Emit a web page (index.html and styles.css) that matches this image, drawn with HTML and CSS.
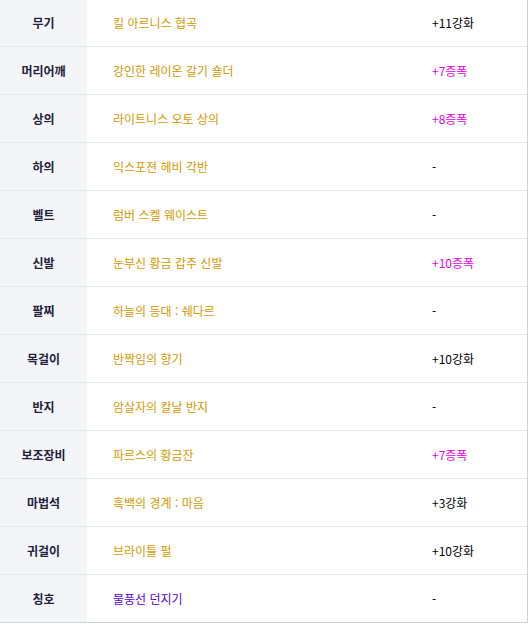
FILE: index.html
```html
<!DOCTYPE html>
<html lang="ko">
<head>
<meta charset="utf-8">
<link rel="stylesheet" href="styles.css">
</head>
<body>
<div class="equip">
  <div class="row"><div class="slot">무기</div><div class="name">킬 아르니스 협곡</div><div class="up">+11강화</div></div>
  <div class="row"><div class="slot">머리어깨</div><div class="name">강인한 레이온 갈기 숄더</div><div class="up amp">+7증폭</div></div>
  <div class="row"><div class="slot">상의</div><div class="name">라이트니스 오토 상의</div><div class="up amp">+8증폭</div></div>
  <div class="row"><div class="slot">하의</div><div class="name">익스포젼 헤비 각반</div><div class="up">-</div></div>
  <div class="row"><div class="slot">벨트</div><div class="name">럼버 스켈 웨이스트</div><div class="up">-</div></div>
  <div class="row"><div class="slot">신발</div><div class="name">눈부신 황금 갑주 신발</div><div class="up amp">+10증폭</div></div>
  <div class="row"><div class="slot">팔찌</div><div class="name">하늘의 등대 : 쉐다르</div><div class="up">-</div></div>
  <div class="row"><div class="slot">목걸이</div><div class="name">반짝임의 향기</div><div class="up">+10강화</div></div>
  <div class="row"><div class="slot">반지</div><div class="name">암살자의 칼날 반지</div><div class="up">-</div></div>
  <div class="row"><div class="slot">보조장비</div><div class="name">파르스의 황금잔</div><div class="up amp">+7증폭</div></div>
  <div class="row"><div class="slot">마법석</div><div class="name">흑백의 경계 : 마음</div><div class="up">+3강화</div></div>
  <div class="row"><div class="slot">귀걸이</div><div class="name">브라이틀 펄</div><div class="up">+10강화</div></div>
  <div class="row last"><div class="slot">칭호</div><div class="name rare">물풍선 던지기</div><div class="up">-</div></div>
</div>
</body>
</html>
```
FILE: styles.css
```css
html, body {
  margin: 0;
  padding: 0;
  background: #ffffff;
}
body {
  font-family: "Noto Sans CJK KR", "Noto Sans", sans-serif;
  font-size: 12px;
}
.equip {
  width: 527px;
  margin-top: -2px;
  border-right: 1px solid #cfcfd6;
  border-bottom: 1px solid #cfcfd6;
}
.row {
  display: grid;
  grid-template-columns: 87px 345px 1fr;
  height: 47px;
  border-top: 1px solid #e6e6ea;
  align-items: center;
}
.row:first-child {
  border-top-color: #ffffff;
}
.slot {
  height: 100%;
  background: #f4f5f9;
  display: flex;
  align-items: center;
  justify-content: center;
  font-weight: 700;
  color: #22223a;
}
.name {
  padding-left: 26px;
  color: #d29a00;
}
.name.rare {
  color: #5a00d2;
}
.up {
  color: #000000;
}
.up.amp {
  color: #e000e0;
}
```
